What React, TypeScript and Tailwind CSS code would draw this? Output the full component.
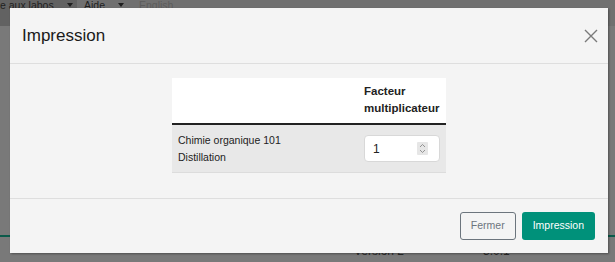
const font = { fontFamily: '"Liberation Sans", Arial, sans-serif' };

const Caret = () => (
    <svg width="6" height="4" viewBox="0 0 6 4" className="block">
        <path d="M0 0 L6 0 L3 4 Z" fill="#1f1f1f" />
    </svg>
);

const Spinner = () => (
    <svg width="11" height="13" viewBox="0 0 11 13" className="block">
        <rect x="0" y="0" width="11" height="13" rx="1" fill="#e6e6e6" />
        <path d="M3 5 L5.5 2.5 L8 5" stroke="#8a8a8a" strokeWidth="0.9" fill="none" />
        <path d="M3 8 L5.5 10.5 L8 8" stroke="#8a8a8a" strokeWidth="0.9" fill="none" />
    </svg>
);

const CloseIcon = () => (
    <svg width="14" height="14" viewBox="0 0 14 14" className="block">
        <path d="M1 1 L13 13 M13 1 L1 13" stroke="#7a7a7a" strokeWidth="1.4" />
    </svg>
);

const App = () => {
    return (
        <div className="relative w-[615px] h-[262px] overflow-hidden bg-[#797979]" style={font}>
            {/* page behind the dialog, dimmed */}
            <div className="flex flex-col h-full">
                <div className="flex h-[26px] items-start text-[10.5px] leading-[12px] bg-[#707070] text-[#1f1f1f]">
                    <div className="flex items-start w-[77px] h-full bg-[#626262] whitespace-nowrap">
                        <span className="-mt-[1px]">e aux labos</span>
                        <span className="ml-[13px] mt-[3px]"><Caret /></span>
                    </div>
                    <span className="ml-[7px] -mt-[1px]">Aide</span>
                    <span className="ml-[13px] mt-[3px]"><Caret /></span>
                    <span className="ml-[15px] -mt-[1px] text-[#5c5c5c]">English</span>
                </div>
                <div className="flex-1" />
                <div className="border-t-2 border-[#0b5a4a] h-[27px] flex text-[12px] text-[#2a2a2a]">
                    <span className="ml-[354px] mt-[5px]">Version 2</span>
                    <span className="ml-[79px] mt-[5px]">3.0.1</span>
                </div>
            </div>

            {/* dialog */}
            <div className="absolute left-[10px] top-[8px] w-[598px] h-[245px] bg-[#f4f4f4] flex flex-col shadow-[1px_1px_2px_rgba(0,0,0,0.35)]">
                <div className="h-[56px] flex items-center justify-between pl-[12px] pr-[10px] border-b border-[#dedede]">
                    <h1 className="text-[17px] text-[#1a1a1a] mt-[1px]">Impression</h1>
                    <CloseIcon />
                </div>

                <div className="flex-1 flex justify-center pt-[14px]">
                    <table className="w-[274px] h-fit border-collapse text-[#222]">
                        <thead>
                            <tr className="bg-white">
                                <th className="w-[186px] border-b-2 border-[#222]" />
                                <th className="text-left font-bold text-[11.5px] leading-[17px] pl-[6px] pr-[2px] pt-[5px] pb-[6px] h-[46px] border-b-2 border-[#222]">
                                    Facteur
                                    <br />
                                    multiplicateur
                                </th>
                            </tr>
                        </thead>
                        <tbody>
                            <tr className="bg-[#e8e8e8] border-b border-[#dcdcdc]">
                                <td className="text-[10.5px] leading-[17px] pl-[6px] pt-[7px] pb-[6px] align-middle">
                                    Chimie organique 101
                                    <br />
                                    Distillation
                                </td>
                                <td className="pl-[6px] pr-[6px] align-middle">
                                    <div className="w-[76px] h-[27px] bg-white border border-[#d8d8d8] rounded-[4px] flex items-center justify-between pl-[8px] pr-[11px]">
                                        <span className="text-[12px] text-[#222]">1</span>
                                        <Spinner />
                                    </div>
                                </td>
                            </tr>
                        </tbody>
                    </table>
                </div>

                <div className="h-[55px] border-t border-[#dedede] flex items-center justify-end gap-[6px] pr-[13px]">
                    <button className="h-[28px] px-[10px] text-[10.5px] text-[#6c757d] border border-[#6c757d] rounded-[3px] bg-transparent">
                        Fermer
                    </button>
                    <button className="h-[28px] px-[11px] text-[10.5px] text-white bg-[#00917a] rounded-[3px]">
                        Impression
                    </button>
                </div>
            </div>
        </div>
    );
};

export default App;
